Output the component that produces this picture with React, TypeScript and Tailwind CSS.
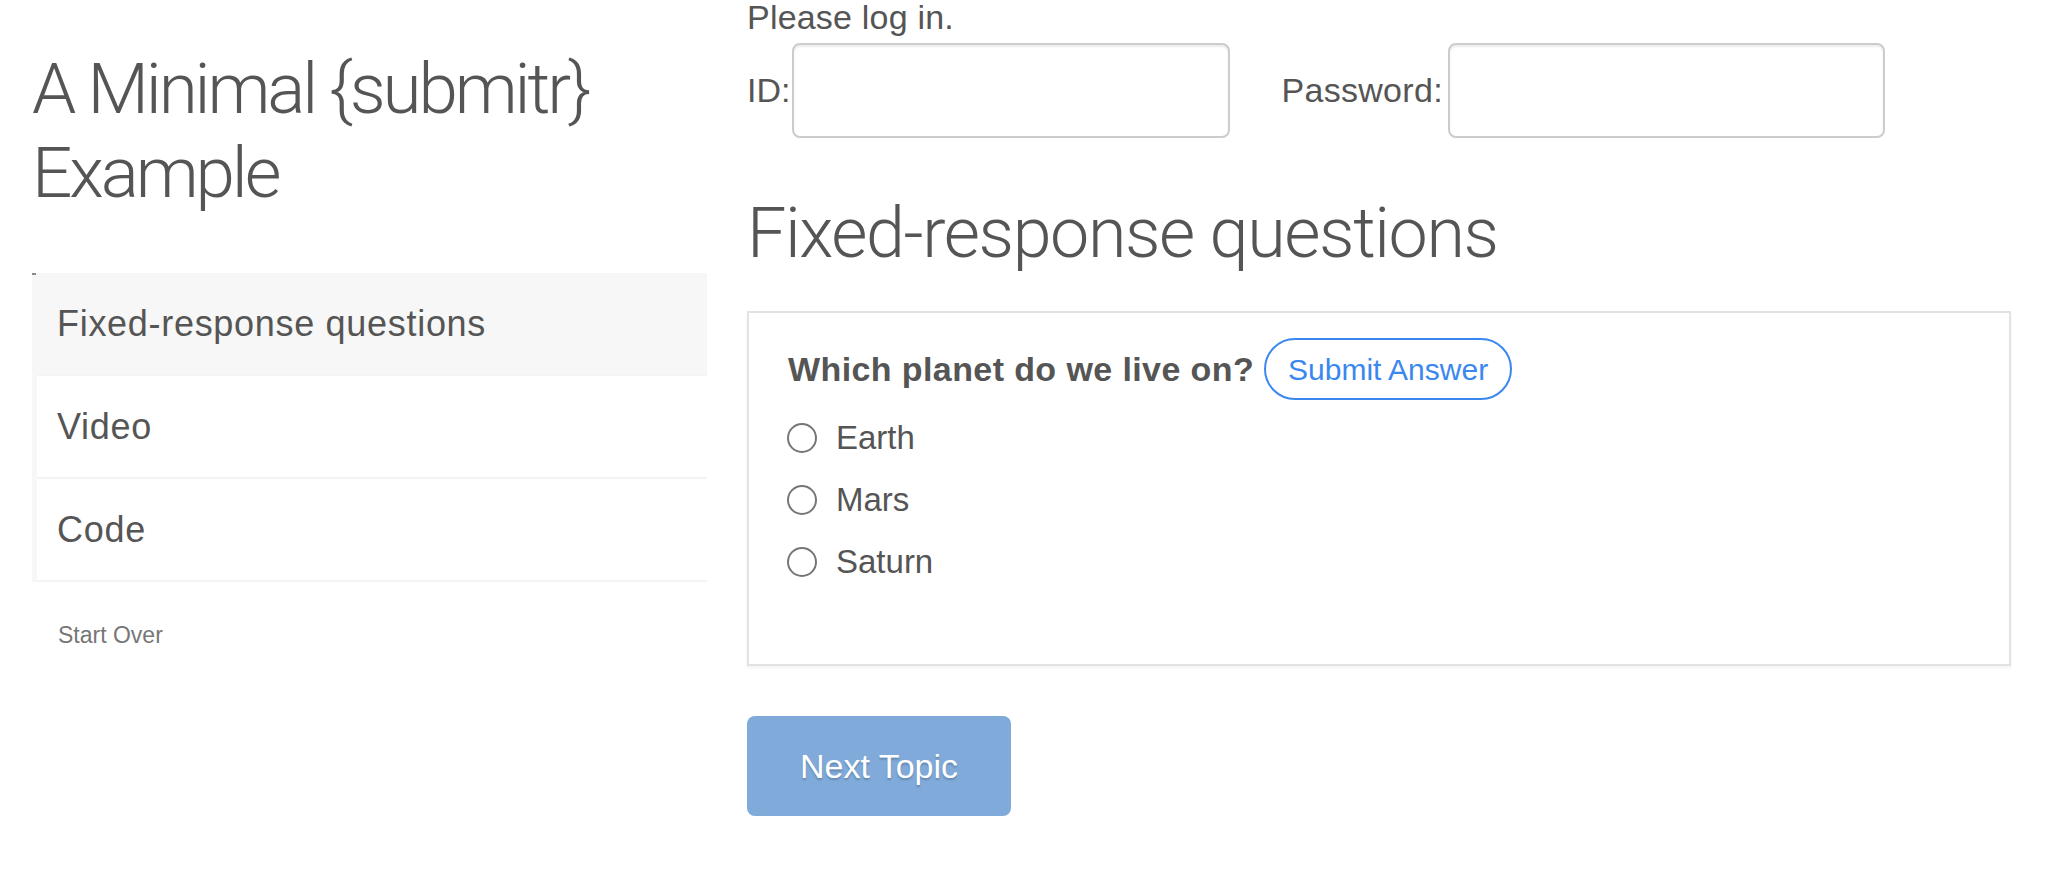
const topics = ["Fixed-response questions", "Video", "Code"];
const options = ["Earth", "Mars", "Saturn"];

function Sidebar() {
  return (
    <aside className="w-[707px] shrink-0 pl-[32px]">
      <h1 className="mt-[47px] font-['Roboto',sans-serif] text-[71px] font-light leading-[84px] tracking-[-3.1px]">
        A Minimal {"{submitr}"} Example
      </h1>
      <div className="relative mt-[58px] border-l-[5px] border-[#f7f7f7]">
        <span className="absolute -left-[5px] top-0 h-[2px] w-[4px] bg-[#8a8a8a]" />
        {topics.map((t, i) => (
          <div
            key={t}
            className={
              i === 0
                ? "flex h-[103px] items-center border-b-2 border-[#f4f4f4] bg-[#f7f7f7] pl-[20px] text-[36px] tracking-[0.7px]"
                : "flex h-[103px] items-center border-b-2 border-[#f4f4f4] pl-[20px] text-[36px] tracking-[0.7px]"
            }
          >
            {t}
          </div>
        ))}
      </div>
      <div className="mt-[37px] pl-[26px] text-[23px] leading-[33px] text-[#777]">Start Over</div>
    </aside>
  );
}

function Main() {
  return (
    <main className="ml-[40px] w-[1264px]">
      <p className="text-[34px] leading-[34px] tracking-[0.2px]">Please log in.</p>
      <div className="mt-[9px] flex items-center text-[34px]">
        <label>ID:</label>
        <input
          type="text"
          className="ml-[2px] h-[95px] w-[438px] rounded-[8px] border-2 border-[#ccc] shadow-[inset_0_2px_2px_rgba(0,0,0,0.075)] outline-none"
        />
        <label className="ml-[51px] tracking-[0.3px]">Password:</label>
        <input
          type="password"
          className="ml-[5px] h-[95px] w-[437px] rounded-[8px] border-2 border-[#ccc] shadow-[inset_0_2px_2px_rgba(0,0,0,0.075)] outline-none"
        />
      </div>
      <h2 className="mt-[57px] font-['Roboto',sans-serif] text-[70px] font-light leading-[77px] tracking-[-1.4px]">
        Fixed-response questions
      </h2>
      <section className="mt-[39px] border-2 border-[#e2e2e2] px-[39px] pb-[71px] pt-[25px] shadow-[0_2px_3px_rgba(0,0,0,0.05)]">
        <div className="flex items-center">
          <span className="text-[34px] font-bold tracking-[0.4px]">Which planet do we live on?</span>
          <button className="ml-[10px] h-[62px] rounded-full border-2 border-[#3b87f0] px-[22px] text-[30px] text-[#3b87f0]">
            Submit Answer
          </button>
        </div>
        <div className="mt-[7px]">
          {options.map((o) => (
            <label key={o} className="flex h-[62px] items-center">
              <span className="-ml-[1px] h-[30px] w-[30px] rounded-full border-2 border-[#767676]" />
              <span className="ml-[19px] text-[33px]">{o}</span>
            </label>
          ))}
        </div>
      </section>
      <div className="mt-[50px]">
        <button className="h-[100px] w-[264px] rounded-[8px] bg-[#7faad9] text-[34px] text-white [text-shadow:0_2px_2px_rgba(0,0,0,0.2)]">
          Next Topic
        </button>
      </div>
    </main>
  );
}

export default function App() {
  return (
    <div className="flex min-h-screen bg-white font-['Liberation_Sans','Helvetica_Neue',Arial,sans-serif] text-[#555]">
      <Sidebar />
      <Main />
    </div>
  );
}
